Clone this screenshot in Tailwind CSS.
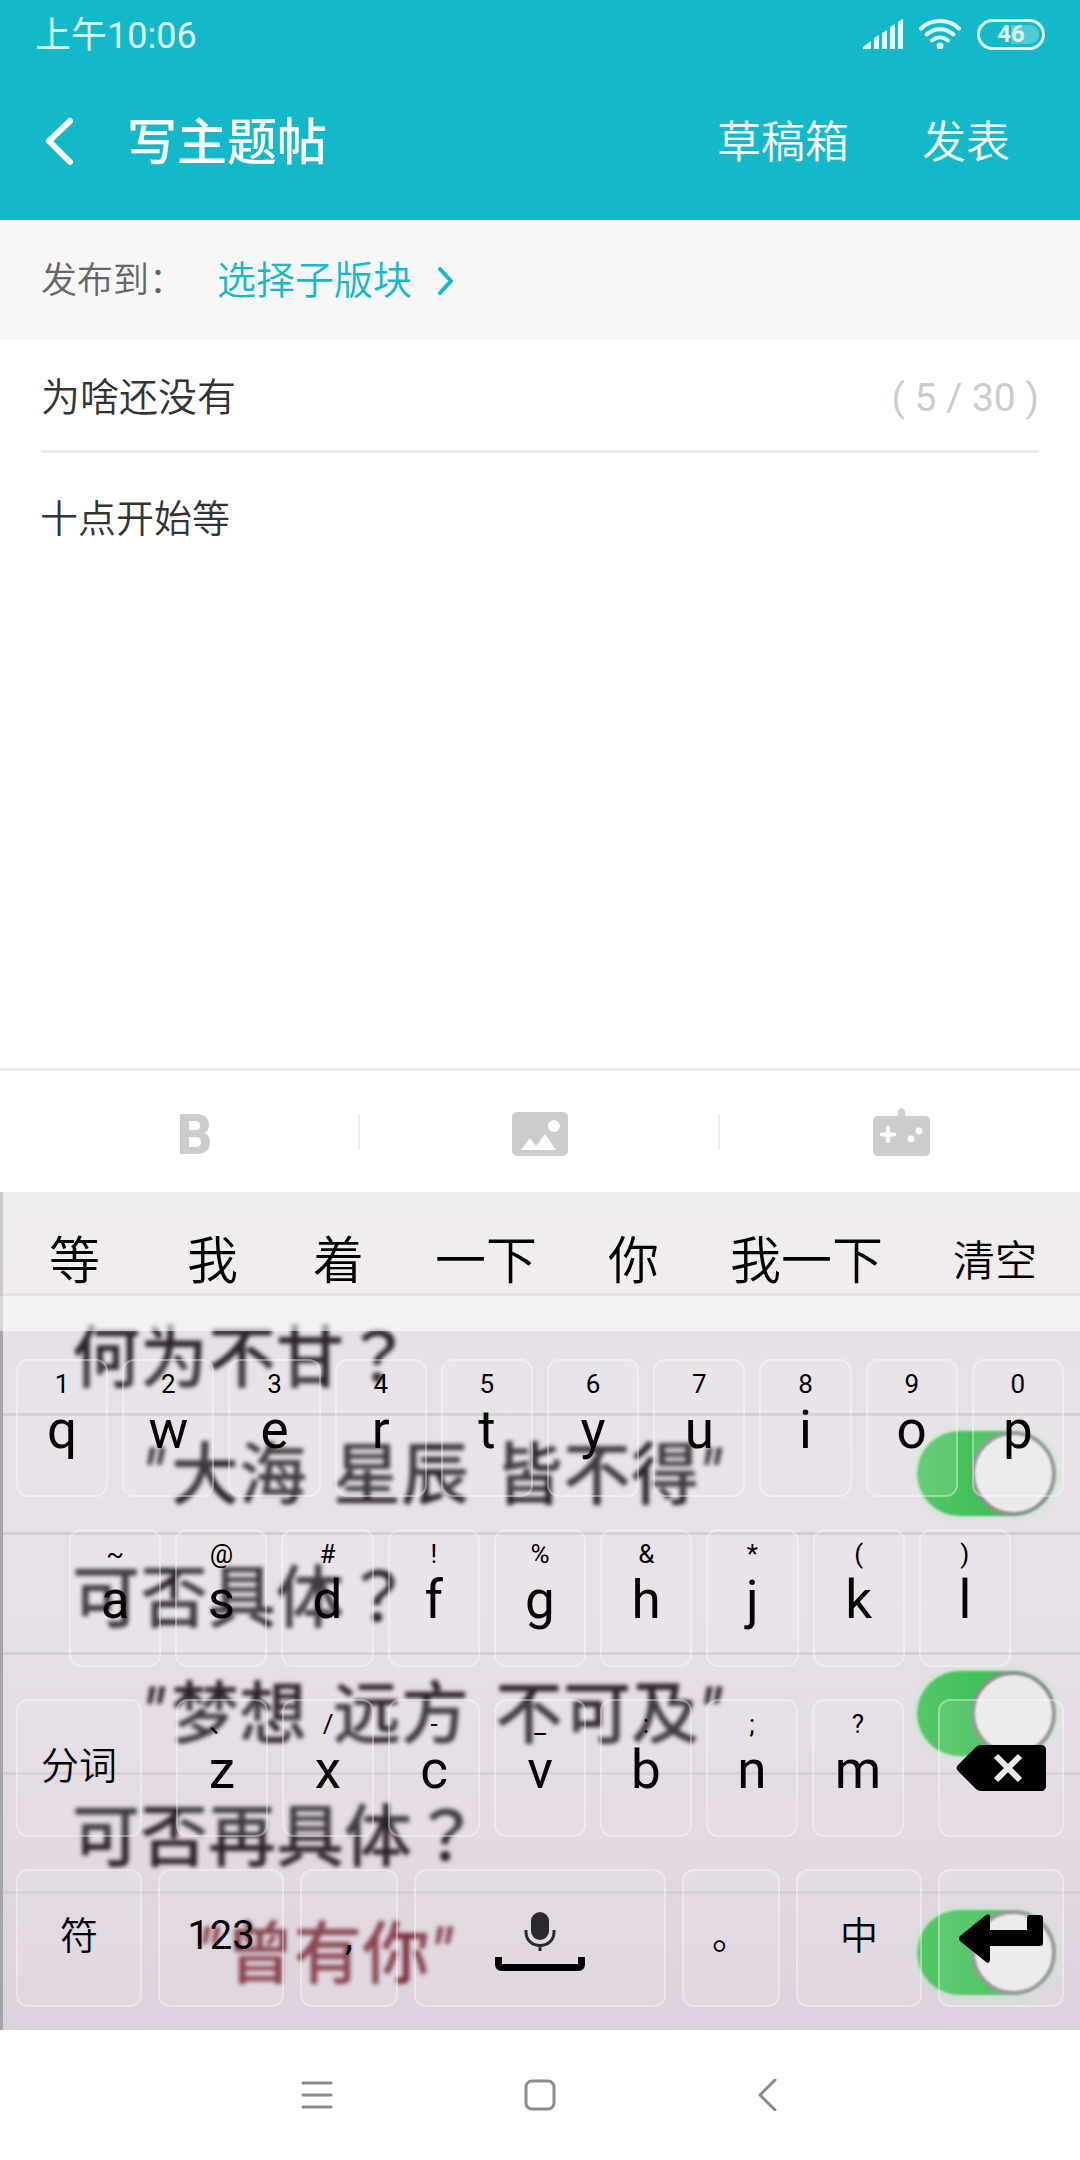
<!DOCTYPE html>
<html lang="zh-CN">
<head>
  <meta charset="UTF-8">
  <meta name="viewport" content="width=device-width, initial-scale=1.0">
  <title>写主题帖</title>
  <script src="https://cdn.jsdelivr.net/npm/@tailwindcss/browser@4"></script>
  <style>
    body { font-family: Roboto, 'Noto Sans CJK SC', sans-serif; }
  </style>
</head>
<body class="bg-white text-[#333333]">
<div class="flex min-h-screen flex-col">

  <header class="flex h-[220px] flex-col bg-[#14b9c9] text-white">
    <!-- status bar -->
    <div class="flex h-[68px] items-center justify-between pl-[35px] pr-[35px] text-[#dffbff]">
      <span class="pt-1 text-[36px] leading-[48px]">上午10:06</span>
      <div class="flex items-center gap-4">
        <svg width="40" height="30" viewBox="0 0 40 30" fill="currentColor" aria-hidden="true">
          <path d="M0 28l8-6v8H0zM11 19l5-3v14h-5zM19 14l5-3v19h-5zM27 8l5-3v25h-5zM35 3l5-3v30h-5z"/>
        </svg>
        <svg width="42" height="30" viewBox="0 0 42 30" fill="none" stroke="currentColor" stroke-width="4" stroke-linecap="round" aria-hidden="true">
          <path d="M2 9.500C12-.5 30-.5 40 9.500M7.500 15.500c8-7 19-7 27 0M13 21.500c5-4 11-4 16 0"/>
          <circle cx="21" cy="27" r="1.500"/>
        </svg>
        <div class="relative flex h-[31px] w-[68px] items-center justify-center rounded-full border-3 border-current">
          <span class="absolute right-[3px] h-[19px] w-7 rounded-r-full bg-white/25"></span>
          <span class="relative text-[24px] leading-6 font-bold">46</span>
        </div>
      </div>
    </div>
    <!-- title bar -->
    <div class="flex h-[146px] items-center pl-[45px] pr-[70px]">
      <button type="button" aria-label="返回">
        <svg width="28" height="48" viewBox="0 0 28 48" fill="none" stroke="currentColor" stroke-width="6" stroke-linecap="round" stroke-linejoin="round">
          <path d="M25 4L4 24l21 21"/>
        </svg>
      </button>
      <h1 class="ml-[54px] pt-1 text-[50px] leading-[60px] font-medium">写主题帖</h1>
      <button type="button" class="ml-auto pt-1 text-[44px] leading-[60px] font-[350]">草稿箱</button>
      <button type="button" class="ml-[73px] pt-1 text-[44px] leading-[60px] font-[350]">发表</button>
    </div>
  </header>

  <main class="flex flex-1 flex-col">
    <div class="flex h-[120px] items-center bg-[#f7f7f7] pl-[41px]">
      <span class="w-[176px] pt-[2px] text-[36px] leading-[48px] font-[350] text-[#666666]">发布到：</span>
      <button type="button" class="flex items-center gap-[25px] pt-[2px] text-[39px] leading-[48px] font-[350] text-[#14b9c9]">
        选择子版块
        <svg width="17" height="28" viewBox="0 0 17 28" fill="none" stroke="currentColor" stroke-width="4" stroke-linecap="round" stroke-linejoin="round" aria-hidden="true">
          <path d="M3 2l11 12L3 26"/>
        </svg>
      </button>
    </div>

    <div class="mx-[41px] flex h-[113px] items-center border-b-3 border-[#ececec] pt-[6px]">
      <label for="title" class="sr-only">标题</label>
      <input id="title" type="text" value="为啥还没有" maxlength="30" class="h-[60px] min-w-0 flex-1 text-[39px] leading-[60px] font-[350] outline-none">
      <span class="text-[39px] leading-[60px] text-[#cccccc]">( 5 / 30 )</span>
    </div>

    <label for="content" class="sr-only">正文</label>
    <textarea id="content" class="flex-1 resize-none px-10 pt-[38px] text-[38px] leading-[56px] font-[350] outline-none">十点开始等</textarea>

    <!-- editor tools -->
    <div class="grid h-[124px] grid-cols-3 items-center border-t-3 border-[#ececec]">
      <button type="button" aria-label="加粗" class="flex h-[36px] items-center justify-center border-r-2 border-[#ececec] pl-8">
        <svg width="30" height="40" viewBox="0 0 30 40" fill="#cccccc" fill-rule="evenodd" class="mt-1 shrink-0">
          <path d="M0 0h16c8 0 13 4 13 11 0 4-2 7-5 8 4 1 6 5 6 9 0 8-5 12-13 12H0zM9 7v9h6c3 0 5-1 5-4.500S18 7 15 7zM9 23v10h7c3 0 5-2 5-5s-2-5-5-5z"/>
        </svg>
      </button>
      <button type="button" aria-label="插入图片" class="flex h-[36px] items-center justify-center border-r-2 border-[#ececec] pl-[2px]">
        <svg width="56" height="44" viewBox="0 0 56 44" class="mt-1 shrink-0">
          <rect width="56" height="44" rx="5" fill="#cccccc"/>
          <circle cx="42" cy="14" r="6" fill="white"/>
          <path d="M9 38l9-12 6 8 9-12 11 16z" fill="white"/>
        </svg>
      </button>
      <button type="button" aria-label="表情" class="flex h-[36px] items-center justify-center pl-[2px]">
        <svg width="57" height="48" viewBox="0 0 57 48" class="shrink-0">
          <path d="M5 8h20V3q3.500-6 7 0v5h20q5 0 5 5v30q0 5-5 5H5q-5 0-5-5V13q0-5 5-5z" fill="#cccccc"/>
          <path d="M15 20v13M9 26.500h12" stroke="white" stroke-width="4" stroke-linecap="round"/>
          <circle cx="46" cy="23" r="3.500" fill="white"/>
          <circle cx="38" cy="31" r="3.500" fill="white"/>
        </svg>
      </button>
    </div>
  </main>

  <!-- keyboard -->
  <section aria-label="键盘" class="relative overflow-hidden bg-[#e7e2e7] text-black">
    <!-- keyboard wallpaper -->
    <div id="wallpaper" aria-hidden="true" class="absolute inset-0 grid grid-rows-6 border-l-3 border-[#a5a5aa] bg-linear-to-b from-[#e6e1e6] via-[#e8e0e8] to-[#dcd2dd] pt-[101px] pb-[19px] font-medium"></div>

    <div class="relative flex h-[139px] items-center bg-linear-to-b from-white/40 from-75% to-white/55 to-75% pl-[49px] pr-[43px] text-[51px] leading-[60px] font-[350]">
      <div class="flex gap-[71px]">
        <button type="button" class="mr-4">等</button>
        <button type="button" class="mr-1">我</button>
        <button type="button">着</button>
        <button type="button">一下</button>
        <button type="button">你</button>
        <button type="button">我一下</button>
      </div>
      <button type="button" class="ml-auto text-[42px]">清空</button>
    </div>

    <div class="relative grid gap-8 px-4 pt-7 pb-[23px]">
      <div id="row1" class="grid h-[138px] grid-cols-10 gap-[14px]"></div>
      <div id="row2" class="grid h-[138px] grid-cols-9 gap-[14px] px-[53px]"></div>
      <div class="grid h-[138px] grid-cols-[126fr_728fr_126fr] gap-[34px] text-[38px]">
        <button type="button" class="rounded-xl border-2 border-white/35 bg-white/10 pb-1 font-[350]">分词</button>
        <div id="row3" class="grid grid-cols-7 gap-[14px]"></div>
        <button type="button" aria-label="删除" class="flex items-center justify-center rounded-xl border-2 border-white/35 bg-white/10">
          <svg width="90" height="46" viewBox="0 0 90 46">
            <path d="M2 20L20 2q2-2 5-2h60q5 0 5 5v36q0 5-5 5H25q-3 0-5-2L2 26q-3-3 0-6z"/>
            <path d="M40 11l24 24M64 11L40 35" stroke="#ebe7eb" stroke-width="6"/>
          </svg>
        </button>
      </div>
      <div class="grid h-[138px] grid-cols-[126fr_126fr_98fr_252fr_98fr_126fr_126fr] gap-4 text-[38px] font-[350]">
        <button type="button" class="rounded-xl border-2 border-white/35 bg-white/10 pb-1">符</button>
        <button type="button" class="rounded-xl border-2 border-white/35 bg-white/10 pb-1 text-[40px] font-normal">123</button>
        <button type="button" class="rounded-xl border-2 border-white/35 bg-white/10 pb-1 text-[40px] font-normal">,</button>
        <button type="button" aria-label="空格" class="flex items-center justify-center rounded-xl border-2 border-white/35 bg-white/10 pt-[6px]">
          <svg width="90" height="60" viewBox="0 0 90 60" fill="none">
            <rect x="36" y="1" width="18" height="28" rx="9" fill="#2b2b2d"/>
            <path d="M31 19v2c0 18 28 18 28 0v-2M45 34v6" stroke="#2b2b2d" stroke-width="3"/>
            <path d="M3.500 46v7q0 3.500 3.500 3.500h76q3.500 0 3.500-3.500v-7" stroke="black" stroke-width="7"/>
          </svg>
        </button>
        <button type="button" class="rounded-xl border-2 border-white/35 bg-white/10 pb-1">。</button>
        <button type="button" class="rounded-xl border-2 border-white/35 bg-white/10 pb-1">中</button>
        <button type="button" aria-label="换行" class="flex items-center justify-center rounded-xl border-2 border-white/35 bg-white/10">
          <svg width="84" height="49" viewBox="0 0 84 49">
            <path d="M1 22L27 1q4-2 4 2v13h37V4q0-3 3-3h10q3 0 3 3v25q0 3-3 3H31v14q0 4-4 2L1 27q-2-2.500 0-5z"/>
          </svg>
        </button>
      </div>
    </div>
  </section>

  <!-- system navigation -->
  <nav class="flex h-[130px] items-center justify-center gap-[191px] bg-white text-[#8a8a8a]">
    <button type="button" aria-label="菜单">
      <svg width="32" height="32" viewBox="0 0 32 32" fill="none" stroke="currentColor" stroke-width="3" stroke-linecap="round">
        <path d="M2 4h28M2 16h28M2 28h28"/>
      </svg>
    </button>
    <button type="button" aria-label="主页">
      <svg width="32" height="32" viewBox="0 0 32 32" fill="none" stroke="currentColor" stroke-width="3">
        <rect x="2" y="2" width="28" height="28" rx="6"/>
      </svg>
    </button>
    <button type="button" aria-label="返回">
      <svg width="32" height="32" viewBox="0 0 32 32" fill="none" stroke="currentColor" stroke-width="3" stroke-linecap="round" stroke-linejoin="round">
        <path d="M28 1L13 16l15 15"/>
      </svg>
    </button>
  </nav>
</div>

<script>
  // [letter, hint] for each row of keys
  const rows = {
    row1: [["q","1"],["w","2"],["e","3"],["r","4"],["t","5"],["y","6"],["u","7"],["i","8"],["o","9"],["p","0"]],
    row2: [["a","~"],["s","@"],["d","#"],["f","!"],["g","%"],["h","&amp;"],["j","*"],["k","("],["l",")"]],
    row3: [["z","、"],["x","/"],["c","-"],["v","_"],["b",":"],["n",";"],["m","?"]]
  };

  for (const id in rows) {
    document.getElementById(id).innerHTML = rows[id].map(([letter, hint]) => `
      <button type="button" class="flex flex-col items-center gap-1 rounded-xl border-2 border-white/35 bg-white/10 pt-[9px]">
        <span class="h-7 text-[26px] leading-7">${hint}</span>
        <span class="h-14 text-[53px] leading-[56px]">${letter}</span>
      </button>
    `).join("");
  }

  const lines = [
    { words: ["何为不甘"], question: true },
    { words: ["大海", "星辰", "皆不得"], quoted: true },
    { words: ["可否具体"], question: true },
    { words: ["梦想", "远方", "不可及"], quoted: true },
    { words: ["可否再具体"], question: true },
    { words: ["曾有你"], quoted: true, red: true }
  ];

  const toggle = `
    <div class="ml-auto mr-6 flex h-[85px] w-[139px] justify-end rounded-full bg-linear-to-r from-[#55c86a] via-[#3fbf56] to-[#7d8781] blur-[1px] shadow-[0_0_10px_#b4ecc0]">
      <div class="h-[85px] w-[85px] rounded-full border-4 border-[#8b918d] bg-[#ebeaeb]"></div>
    </div>`;

  document.getElementById("wallpaper").innerHTML = lines.map(line => `
    <div class="flex items-center border-t-3 border-[#d3ccd3] text-[68px] leading-[80px] ${line.red ? "pl-[194px] text-[#7d2f3b]" : line.quoted ? "pl-[139px] text-[#2c232b]" : "pl-[69px] text-[#2c232b]"}">
      <div class="flex gap-[26px] pt-1 whitespace-nowrap blur-[2px]">
        ${line.words.map((word, i) => `<span>${line.quoted && i === 0 ? '<i class="mr-2">"</i>' : ""}${word}${line.quoted && i === line.words.length - 1 ? '<i>"</i>' : ""}${line.question ? `<span lang="zh-TW" class="font-['Noto_Sans_CJK_TC']">？</span>` : ""}</span>`).join("")}
      </div>
      ${line.quoted ? toggle : ""}
    </div>
  `).join("");
</script>
</body>
</html>
